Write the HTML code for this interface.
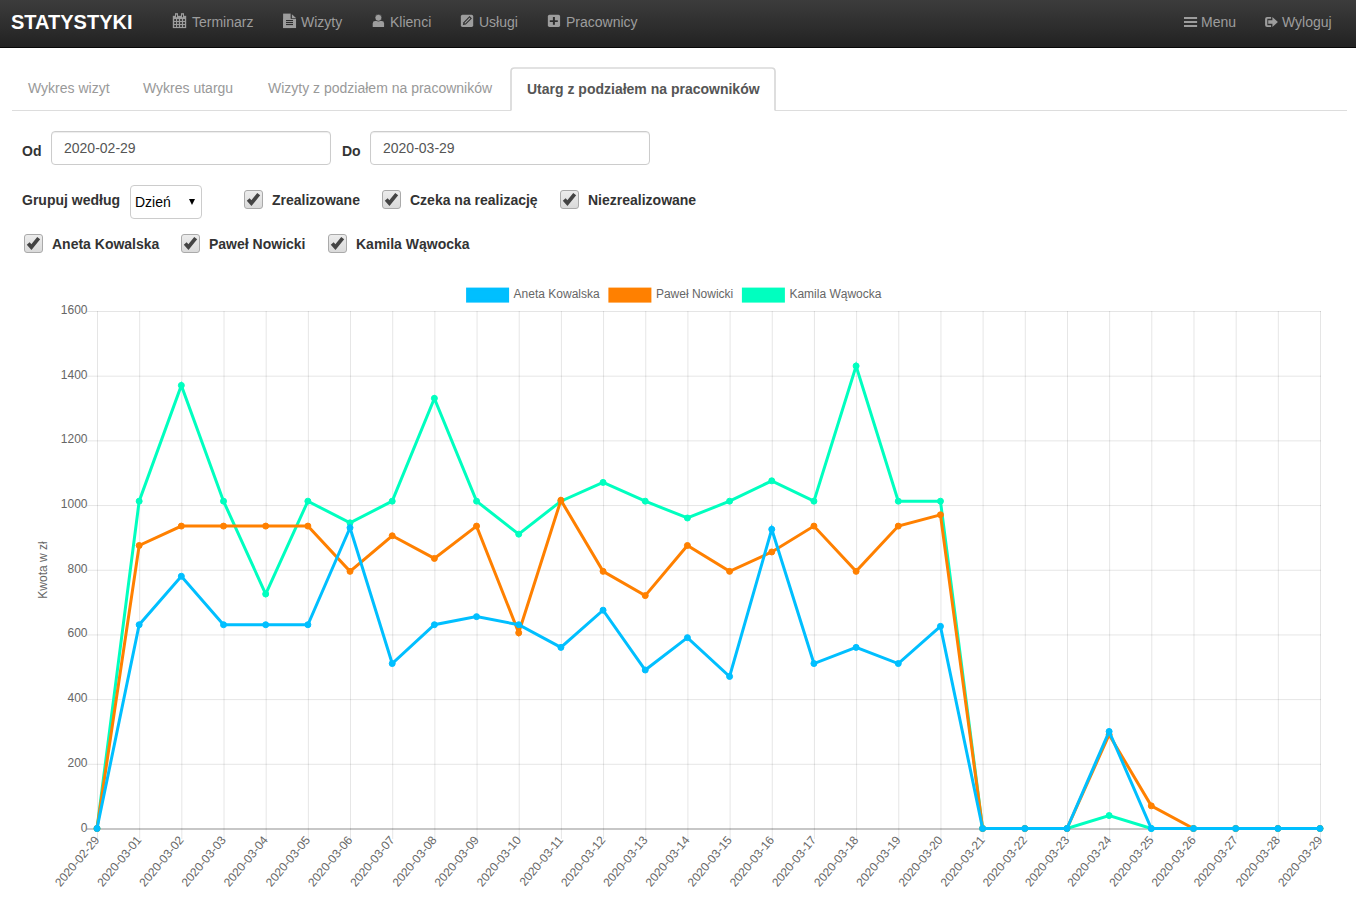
<!DOCTYPE html>
<html><head><meta charset="utf-8">
<style>
*{box-sizing:border-box}
html,body{margin:0;padding:0;background:#fff;width:1356px;height:908px;overflow:hidden;position:relative;font-family:"Liberation Sans",sans-serif;}
.abs{position:absolute;white-space:nowrap}
#nav{position:absolute;left:0;top:0;width:1356px;height:48px;background:linear-gradient(to bottom,#3c3c3c 0%,#222 100%);border-bottom:1px solid #080808}
.brand{font-weight:bold;font-size:20px;color:#fff;line-height:1}
.ni{font-size:14px;color:#9d9d9d;line-height:1}
.ni svg{position:absolute}
.tab{font-size:14px;color:#999;line-height:1}
#tabline{position:absolute;left:12px;top:110px;width:1335px;height:1px;background:#ddd}
#acttab{position:absolute;left:511px;top:68px;width:264px;height:43px;background:#fff;border:1px solid #d6d6d6;border-bottom-color:transparent;border-radius:4px 4px 0 0}
.lbl{font-size:14px;font-weight:bold;color:#333;line-height:1}
.inp{position:absolute;height:34px;border:1px solid #ccc;border-radius:4px;background:#fff;box-shadow:inset 0 1px 1px rgba(0,0,0,.075)}
.itxt{font-size:14px;color:#555;line-height:1}
.cb{position:absolute;width:19px;height:19px;border:1px solid #aaa;border-radius:3px;background:linear-gradient(#ececec,#dadada)}
.cb svg{position:absolute;left:0;top:0}
.yt{font-family:"Liberation Sans",sans-serif;font-size:12px;fill:#666}
</style></head><body>
<div id="nav">
  <div class="abs brand" style="left:11px;top:11.5px">STATYSTYKI</div>
  <svg class="abs" style="left:0;top:0" width="1356" height="48" viewBox="0 0 1356 48">
<g fill="#9d9d9d">
<rect x="172.8" y="15.8" width="13.4" height="12.3"/>
<rect x="175" y="13.2" width="3" height="3.5"/><rect x="181" y="13.2" width="3" height="3.5"/>
<rect x="283.1" y="13.6" width="7.7" height="14.45"/><rect x="283.1" y="18.7" width="12.95" height="9.35"/>
<path d="M291.6 13.9L296 18H291.6Z"/>

<path d="M372.7 26.4V23.4Q372.7 21 375.2 21H381.6Q384.1 21 384.1 23.4V26.4Q384.1 27 383.5 27H373.3Q372.7 27 372.7 26.4Z"/>
<circle cx="378.4" cy="17.75" r="3.45" stroke="#2e2e2e" stroke-width="0.7"/>
<rect x="460.85" y="14.85" width="12.35" height="12.1" rx="1.6"/>
<rect x="547.85" y="14.85" width="12.25" height="12.1" rx="1.6"/>
<rect x="1184" y="17" width="13.1" height="2"/><rect x="1184" y="21" width="13.1" height="2"/><rect x="1184" y="25" width="13.1" height="2"/>
<path d="M1271.1 16.9H1267.1Q1265.1 16.9 1265.1 18.9V25Q1265.1 27 1267.1 27H1271.1V25.2H1267.3V18.7H1271.1Z"/>
<path d="M1268.2 20.2H1272.4V17L1277.9 21.95L1272.4 27V23.8H1268.2Z"/>
</g>
<g fill="#2d2d2d">
<rect x="176.1" y="14.6" width="0.9" height="2.6"/><rect x="182.1" y="14.6" width="0.9" height="2.6"/>
<rect x="174.2" y="19.1" width="1.8" height="1.8"/><rect x="177.1" y="19.1" width="1.8" height="1.8"/><rect x="180.1" y="19.1" width="1.8" height="1.8"/><rect x="183.1" y="19.1" width="1.8" height="1.8"/>
<rect x="174.2" y="22.1" width="1.8" height="1.8"/><rect x="177.1" y="22.1" width="1.8" height="1.8"/><rect x="180.1" y="22.1" width="1.8" height="1.8"/><rect x="183.1" y="22.1" width="1.8" height="1.8"/>
<rect x="174.2" y="25.1" width="1.8" height="1.8"/><rect x="177.1" y="25.1" width="1.8" height="1.8"/><rect x="180.1" y="25.1" width="1.8" height="1.8"/><rect x="183.1" y="25.1" width="1.8" height="1.8"/>
<rect x="290.8" y="13.6" width="0.8" height="5.1"/>
<rect x="286" y="20" width="7" height="1.1"/><rect x="286" y="22" width="7" height="1.1"/><rect x="286" y="24" width="7" height="1.1"/>
<path d="M462.8 24.9L463.5 22.2L469.6 16.1L471.9 18.4L465.8 24.5Z"/>
<rect x="549.8" y="20.3" width="8" height="1.7"/><rect x="552.9" y="17" width="2" height="7.8"/>
</g>
<path d="M464.3 22.9L469.6 17.6L470.4 18.4L465.1 23.7Z" fill="#9d9d9d"/>
</svg>

  <div class="abs ni" style="left:192px;top:15px">Terminarz</div>
  <div class="abs ni" style="left:301px;top:15px">Wizyty</div>
  <div class="abs ni" style="left:390px;top:15px">Klienci</div>
  <div class="abs ni" style="left:479px;top:15px">Usługi</div>
  <div class="abs ni" style="left:566px;top:15px">Pracownicy</div>
  <div class="abs ni" style="left:1201px;top:15px">Menu</div>
  <div class="abs ni" style="left:1282px;top:15px">Wyloguj</div>
</div>
<div id="tabline"></div>
<svg class="abs" style="left:0;top:0" width="1356" height="120"><path d="M511 111V71.5Q511 68 514.5 68H771.5Q775 68 775 71.5V111Z" fill="#fff"/><path d="M511 110.5V71.5Q511 68 514.5 68H771.5Q775 68 775 71.5V110.5" fill="none" stroke="#d9d9d9" stroke-width="1.7"/></svg>
<div class="abs tab" style="left:28px;top:81px">Wykres wizyt</div>
<div class="abs tab" style="left:143px;top:81px">Wykres utargu</div>
<div class="abs tab" style="left:268px;top:81px">Wizyty z podziałem na pracowników</div>
<div class="abs tab" style="left:527px;top:82px;color:#555;font-weight:bold">Utarg z podziałem na pracowników</div>

<div class="abs lbl" style="left:22px;top:144px">Od</div>
<div class="inp" style="left:51px;top:131px;width:280px"></div>
<div class="abs itxt" style="left:64px;top:141px">2020-02-29</div>
<div class="abs lbl" style="left:342px;top:144px">Do</div>
<div class="inp" style="left:370px;top:131px;width:280px"></div>
<div class="abs itxt" style="left:383px;top:141px">2020-03-29</div>

<div class="abs lbl" style="left:22px;top:193px">Grupuj według</div>
<div class="inp" style="left:130px;top:185px;width:72px;height:34px;box-shadow:none"></div>
<div class="abs itxt" style="left:135px;top:195px;color:#000">Dzień</div>
<svg class="abs" style="left:188px;top:198px" width="8" height="8"><path d="M1 1H7L4 7Z" fill="#000"/></svg>
<div class="cb" style="left:244px;top:190px"><svg width="19" height="19"><path d="M3.2 8.5L6.4 12.1L13.7 3.1" fill="none" stroke="#444" stroke-width="3.8"/></svg></div>
<div class="abs lbl" style="left:272px;top:193px">Zrealizowane</div>
<div class="cb" style="left:382px;top:190px"><svg width="19" height="19"><path d="M3.2 8.5L6.4 12.1L13.7 3.1" fill="none" stroke="#444" stroke-width="3.8"/></svg></div>
<div class="abs lbl" style="left:410px;top:193px">Czeka na realizację</div>
<div class="cb" style="left:560px;top:190px"><svg width="19" height="19"><path d="M3.2 8.5L6.4 12.1L13.7 3.1" fill="none" stroke="#444" stroke-width="3.8"/></svg></div>
<div class="abs lbl" style="left:588px;top:193px">Niezrealizowane</div>
<div class="cb" style="left:24px;top:234px"><svg width="19" height="19"><path d="M3.2 8.5L6.4 12.1L13.7 3.1" fill="none" stroke="#444" stroke-width="3.8"/></svg></div>
<div class="abs lbl" style="left:52px;top:237px">Aneta Kowalska</div>
<div class="cb" style="left:181px;top:234px"><svg width="19" height="19"><path d="M3.2 8.5L6.4 12.1L13.7 3.1" fill="none" stroke="#444" stroke-width="3.8"/></svg></div>
<div class="abs lbl" style="left:209px;top:237px">Paweł Nowicki</div>
<div class="cb" style="left:328px;top:234px"><svg width="19" height="19"><path d="M3.2 8.5L6.4 12.1L13.7 3.1" fill="none" stroke="#444" stroke-width="3.8"/></svg></div>
<div class="abs lbl" style="left:356px;top:237px">Kamila Wąwocka</div>
<svg width="1356" height="908" viewBox="0 0 1356 908" style="position:absolute;left:0;top:0">
<path d="M97.50 311V839M139.67 311V839M181.84 311V839M224.02 311V839M266.19 311V839M308.36 311V839M350.53 311V839M392.71 311V839M434.88 311V839M477.05 311V839M519.22 311V839M561.40 311V839M603.57 311V839M645.74 311V839M687.91 311V839M730.09 311V839M772.26 311V839M814.43 311V839M856.60 311V839M898.78 311V839M940.95 311V839M983.12 311V839M1025.29 311V839M1067.47 311V839M1109.64 311V839M1151.81 311V839M1193.98 311V839M1236.16 311V839M1278.33 311V839M1320.50 311V839" stroke="rgba(0,0,0,0.1)" stroke-width="1" fill="none"/>
<path d="M87 764.31H1321M87 699.62H1321M87 634.94H1321M87 570.25H1321M87 505.56H1321M87 440.88H1321M87 376.19H1321M87 311.50H1321" stroke="rgba(0,0,0,0.1)" stroke-width="1" fill="none"/>
<path d="M87 829H1321" stroke="rgba(0,0,0,0.22)" stroke-width="2" fill="none"/>
<text x="87.5" y="827.50" text-anchor="end" dominant-baseline="central" class="yt">0</text>
<text x="87.5" y="762.81" text-anchor="end" dominant-baseline="central" class="yt">200</text>
<text x="87.5" y="698.12" text-anchor="end" dominant-baseline="central" class="yt">400</text>
<text x="87.5" y="633.44" text-anchor="end" dominant-baseline="central" class="yt">600</text>
<text x="87.5" y="568.75" text-anchor="end" dominant-baseline="central" class="yt">800</text>
<text x="87.5" y="504.06" text-anchor="end" dominant-baseline="central" class="yt">1000</text>
<text x="87.5" y="439.38" text-anchor="end" dominant-baseline="central" class="yt">1200</text>
<text x="87.5" y="374.69" text-anchor="end" dominant-baseline="central" class="yt">1400</text>
<text x="87.5" y="310.00" text-anchor="end" dominant-baseline="central" class="yt">1600</text>
<text transform="translate(47 570) rotate(-90)" text-anchor="middle" class="yt">Kwota w zł</text>
<text transform="translate(96.90 837.8) rotate(-50)" text-anchor="end" dominant-baseline="central" class="yt">2020-02-29</text>
<text transform="translate(139.07 837.8) rotate(-50)" text-anchor="end" dominant-baseline="central" class="yt">2020-03-01</text>
<text transform="translate(181.24 837.8) rotate(-50)" text-anchor="end" dominant-baseline="central" class="yt">2020-03-02</text>
<text transform="translate(223.42 837.8) rotate(-50)" text-anchor="end" dominant-baseline="central" class="yt">2020-03-03</text>
<text transform="translate(265.59 837.8) rotate(-50)" text-anchor="end" dominant-baseline="central" class="yt">2020-03-04</text>
<text transform="translate(307.76 837.8) rotate(-50)" text-anchor="end" dominant-baseline="central" class="yt">2020-03-05</text>
<text transform="translate(349.93 837.8) rotate(-50)" text-anchor="end" dominant-baseline="central" class="yt">2020-03-06</text>
<text transform="translate(392.11 837.8) rotate(-50)" text-anchor="end" dominant-baseline="central" class="yt">2020-03-07</text>
<text transform="translate(434.28 837.8) rotate(-50)" text-anchor="end" dominant-baseline="central" class="yt">2020-03-08</text>
<text transform="translate(476.45 837.8) rotate(-50)" text-anchor="end" dominant-baseline="central" class="yt">2020-03-09</text>
<text transform="translate(518.62 837.8) rotate(-50)" text-anchor="end" dominant-baseline="central" class="yt">2020-03-10</text>
<text transform="translate(560.80 837.8) rotate(-50)" text-anchor="end" dominant-baseline="central" class="yt">2020-03-11</text>
<text transform="translate(602.97 837.8) rotate(-50)" text-anchor="end" dominant-baseline="central" class="yt">2020-03-12</text>
<text transform="translate(645.14 837.8) rotate(-50)" text-anchor="end" dominant-baseline="central" class="yt">2020-03-13</text>
<text transform="translate(687.31 837.8) rotate(-50)" text-anchor="end" dominant-baseline="central" class="yt">2020-03-14</text>
<text transform="translate(729.49 837.8) rotate(-50)" text-anchor="end" dominant-baseline="central" class="yt">2020-03-15</text>
<text transform="translate(771.66 837.8) rotate(-50)" text-anchor="end" dominant-baseline="central" class="yt">2020-03-16</text>
<text transform="translate(813.83 837.8) rotate(-50)" text-anchor="end" dominant-baseline="central" class="yt">2020-03-17</text>
<text transform="translate(856.00 837.8) rotate(-50)" text-anchor="end" dominant-baseline="central" class="yt">2020-03-18</text>
<text transform="translate(898.18 837.8) rotate(-50)" text-anchor="end" dominant-baseline="central" class="yt">2020-03-19</text>
<text transform="translate(940.35 837.8) rotate(-50)" text-anchor="end" dominant-baseline="central" class="yt">2020-03-20</text>
<text transform="translate(982.52 837.8) rotate(-50)" text-anchor="end" dominant-baseline="central" class="yt">2020-03-21</text>
<text transform="translate(1024.69 837.8) rotate(-50)" text-anchor="end" dominant-baseline="central" class="yt">2020-03-22</text>
<text transform="translate(1066.87 837.8) rotate(-50)" text-anchor="end" dominant-baseline="central" class="yt">2020-03-23</text>
<text transform="translate(1109.04 837.8) rotate(-50)" text-anchor="end" dominant-baseline="central" class="yt">2020-03-24</text>
<text transform="translate(1151.21 837.8) rotate(-50)" text-anchor="end" dominant-baseline="central" class="yt">2020-03-25</text>
<text transform="translate(1193.38 837.8) rotate(-50)" text-anchor="end" dominant-baseline="central" class="yt">2020-03-26</text>
<text transform="translate(1235.56 837.8) rotate(-50)" text-anchor="end" dominant-baseline="central" class="yt">2020-03-27</text>
<text transform="translate(1277.73 837.8) rotate(-50)" text-anchor="end" dominant-baseline="central" class="yt">2020-03-28</text>
<text transform="translate(1319.90 837.8) rotate(-50)" text-anchor="end" dominant-baseline="central" class="yt">2020-03-29</text>
<polyline points="97.00,828.50 139.17,501.18 181.34,385.39 223.52,501.18 265.69,594.01 307.86,501.18 350.03,522.85 392.21,501.18 434.38,398.33 476.55,501.18 518.72,534.17 560.90,501.18 603.07,482.42 645.24,501.18 687.41,518.00 729.59,501.18 771.76,480.80 813.93,501.18 856.10,365.98 898.28,501.18 940.45,501.18 982.62,828.50 1024.79,828.50 1066.97,828.50 1109.14,815.56 1151.31,828.50 1193.48,828.50 1235.66,828.50 1277.83,828.50 1320.00,828.50" fill="none" stroke="rgb(0,255,191)" stroke-width="3" stroke-linejoin="miter" stroke-linecap="butt"/>
<g fill="rgb(0,255,191)" stroke="rgb(0,255,191)" stroke-width="1"><circle cx="97.00" cy="828.50" r="3"/><circle cx="139.17" cy="501.18" r="3"/><circle cx="181.34" cy="385.39" r="3"/><circle cx="223.52" cy="501.18" r="3"/><circle cx="265.69" cy="594.01" r="3"/><circle cx="307.86" cy="501.18" r="3"/><circle cx="350.03" cy="522.85" r="3"/><circle cx="392.21" cy="501.18" r="3"/><circle cx="434.38" cy="398.33" r="3"/><circle cx="476.55" cy="501.18" r="3"/><circle cx="518.72" cy="534.17" r="3"/><circle cx="560.90" cy="501.18" r="3"/><circle cx="603.07" cy="482.42" r="3"/><circle cx="645.24" cy="501.18" r="3"/><circle cx="687.41" cy="518.00" r="3"/><circle cx="729.59" cy="501.18" r="3"/><circle cx="771.76" cy="480.80" r="3"/><circle cx="813.93" cy="501.18" r="3"/><circle cx="856.10" cy="365.98" r="3"/><circle cx="898.28" cy="501.18" r="3"/><circle cx="940.45" cy="501.18" r="3"/><circle cx="982.62" cy="828.50" r="3"/><circle cx="1024.79" cy="828.50" r="3"/><circle cx="1066.97" cy="828.50" r="3"/><circle cx="1109.14" cy="815.56" r="3"/><circle cx="1151.31" cy="828.50" r="3"/><circle cx="1193.48" cy="828.50" r="3"/><circle cx="1235.66" cy="828.50" r="3"/><circle cx="1277.83" cy="828.50" r="3"/><circle cx="1320.00" cy="828.50" r="3"/></g>
<polyline points="97.00,828.50 139.17,545.49 181.34,526.09 223.52,526.09 265.69,526.09 307.86,526.09 350.03,571.37 392.21,535.79 434.38,558.43 476.55,526.09 518.72,632.82 560.90,500.21 603.07,571.37 645.24,595.62 687.41,545.49 729.59,571.37 771.76,551.96 813.93,526.09 856.10,571.37 898.28,526.09 940.45,514.77 982.62,828.50 1024.79,828.50 1066.97,828.50 1109.14,734.70 1151.31,805.86 1193.48,828.50 1235.66,828.50 1277.83,828.50 1320.00,828.50" fill="none" stroke="rgb(255,128,0)" stroke-width="3" stroke-linejoin="miter" stroke-linecap="butt"/>
<g fill="rgb(255,128,0)" stroke="rgb(255,128,0)" stroke-width="1"><circle cx="97.00" cy="828.50" r="3"/><circle cx="139.17" cy="545.49" r="3"/><circle cx="181.34" cy="526.09" r="3"/><circle cx="223.52" cy="526.09" r="3"/><circle cx="265.69" cy="526.09" r="3"/><circle cx="307.86" cy="526.09" r="3"/><circle cx="350.03" cy="571.37" r="3"/><circle cx="392.21" cy="535.79" r="3"/><circle cx="434.38" cy="558.43" r="3"/><circle cx="476.55" cy="526.09" r="3"/><circle cx="518.72" cy="632.82" r="3"/><circle cx="560.90" cy="500.21" r="3"/><circle cx="603.07" cy="571.37" r="3"/><circle cx="645.24" cy="595.62" r="3"/><circle cx="687.41" cy="545.49" r="3"/><circle cx="729.59" cy="571.37" r="3"/><circle cx="771.76" cy="551.96" r="3"/><circle cx="813.93" cy="526.09" r="3"/><circle cx="856.10" cy="571.37" r="3"/><circle cx="898.28" cy="526.09" r="3"/><circle cx="940.45" cy="514.77" r="3"/><circle cx="982.62" cy="828.50" r="3"/><circle cx="1024.79" cy="828.50" r="3"/><circle cx="1066.97" cy="828.50" r="3"/><circle cx="1109.14" cy="734.70" r="3"/><circle cx="1151.31" cy="805.86" r="3"/><circle cx="1193.48" cy="828.50" r="3"/><circle cx="1235.66" cy="828.50" r="3"/><circle cx="1277.83" cy="828.50" r="3"/><circle cx="1320.00" cy="828.50" r="3"/></g>
<polyline points="97.00,828.50 139.17,624.73 181.34,576.22 223.52,624.73 265.69,624.73 307.86,624.73 350.03,527.70 392.21,663.55 434.38,624.73 476.55,616.65 518.72,624.73 560.90,647.38 603.07,610.18 645.24,670.02 687.41,637.67 729.59,676.48 771.76,529.32 813.93,663.55 856.10,647.38 898.28,663.55 940.45,626.35 982.62,828.50 1024.79,828.50 1066.97,828.50 1109.14,731.47 1151.31,828.50 1193.48,828.50 1235.66,828.50 1277.83,828.50 1320.00,828.50" fill="none" stroke="rgb(0,191,255)" stroke-width="3" stroke-linejoin="miter" stroke-linecap="butt"/>
<g fill="rgb(0,191,255)" stroke="rgb(0,191,255)" stroke-width="1"><circle cx="97.00" cy="828.50" r="3"/><circle cx="139.17" cy="624.73" r="3"/><circle cx="181.34" cy="576.22" r="3"/><circle cx="223.52" cy="624.73" r="3"/><circle cx="265.69" cy="624.73" r="3"/><circle cx="307.86" cy="624.73" r="3"/><circle cx="350.03" cy="527.70" r="3"/><circle cx="392.21" cy="663.55" r="3"/><circle cx="434.38" cy="624.73" r="3"/><circle cx="476.55" cy="616.65" r="3"/><circle cx="518.72" cy="624.73" r="3"/><circle cx="560.90" cy="647.38" r="3"/><circle cx="603.07" cy="610.18" r="3"/><circle cx="645.24" cy="670.02" r="3"/><circle cx="687.41" cy="637.67" r="3"/><circle cx="729.59" cy="676.48" r="3"/><circle cx="771.76" cy="529.32" r="3"/><circle cx="813.93" cy="663.55" r="3"/><circle cx="856.10" cy="647.38" r="3"/><circle cx="898.28" cy="663.55" r="3"/><circle cx="940.45" cy="626.35" r="3"/><circle cx="982.62" cy="828.50" r="3"/><circle cx="1024.79" cy="828.50" r="3"/><circle cx="1066.97" cy="828.50" r="3"/><circle cx="1109.14" cy="731.47" r="3"/><circle cx="1151.31" cy="828.50" r="3"/><circle cx="1193.48" cy="828.50" r="3"/><circle cx="1235.66" cy="828.50" r="3"/><circle cx="1277.83" cy="828.50" r="3"/><circle cx="1320.00" cy="828.50" r="3"/></g>
<rect x="467.6" y="289.1" width="40" height="12" fill="rgb(0,191,255)" stroke="rgb(0,191,255)" stroke-width="3"/>
<text x="513.6" y="293.8" dominant-baseline="central" class="yt">Aneta Kowalska</text>
<rect x="609.9" y="289.1" width="40" height="12" fill="rgb(255,128,0)" stroke="rgb(255,128,0)" stroke-width="3"/>
<text x="655.9" y="293.8" dominant-baseline="central" class="yt">Paweł Nowicki</text>
<rect x="743.4" y="289.1" width="40" height="12" fill="rgb(0,255,191)" stroke="rgb(0,255,191)" stroke-width="3"/>
<text x="789.4" y="293.8" dominant-baseline="central" class="yt">Kamila Wąwocka</text>
</svg></body></html>
